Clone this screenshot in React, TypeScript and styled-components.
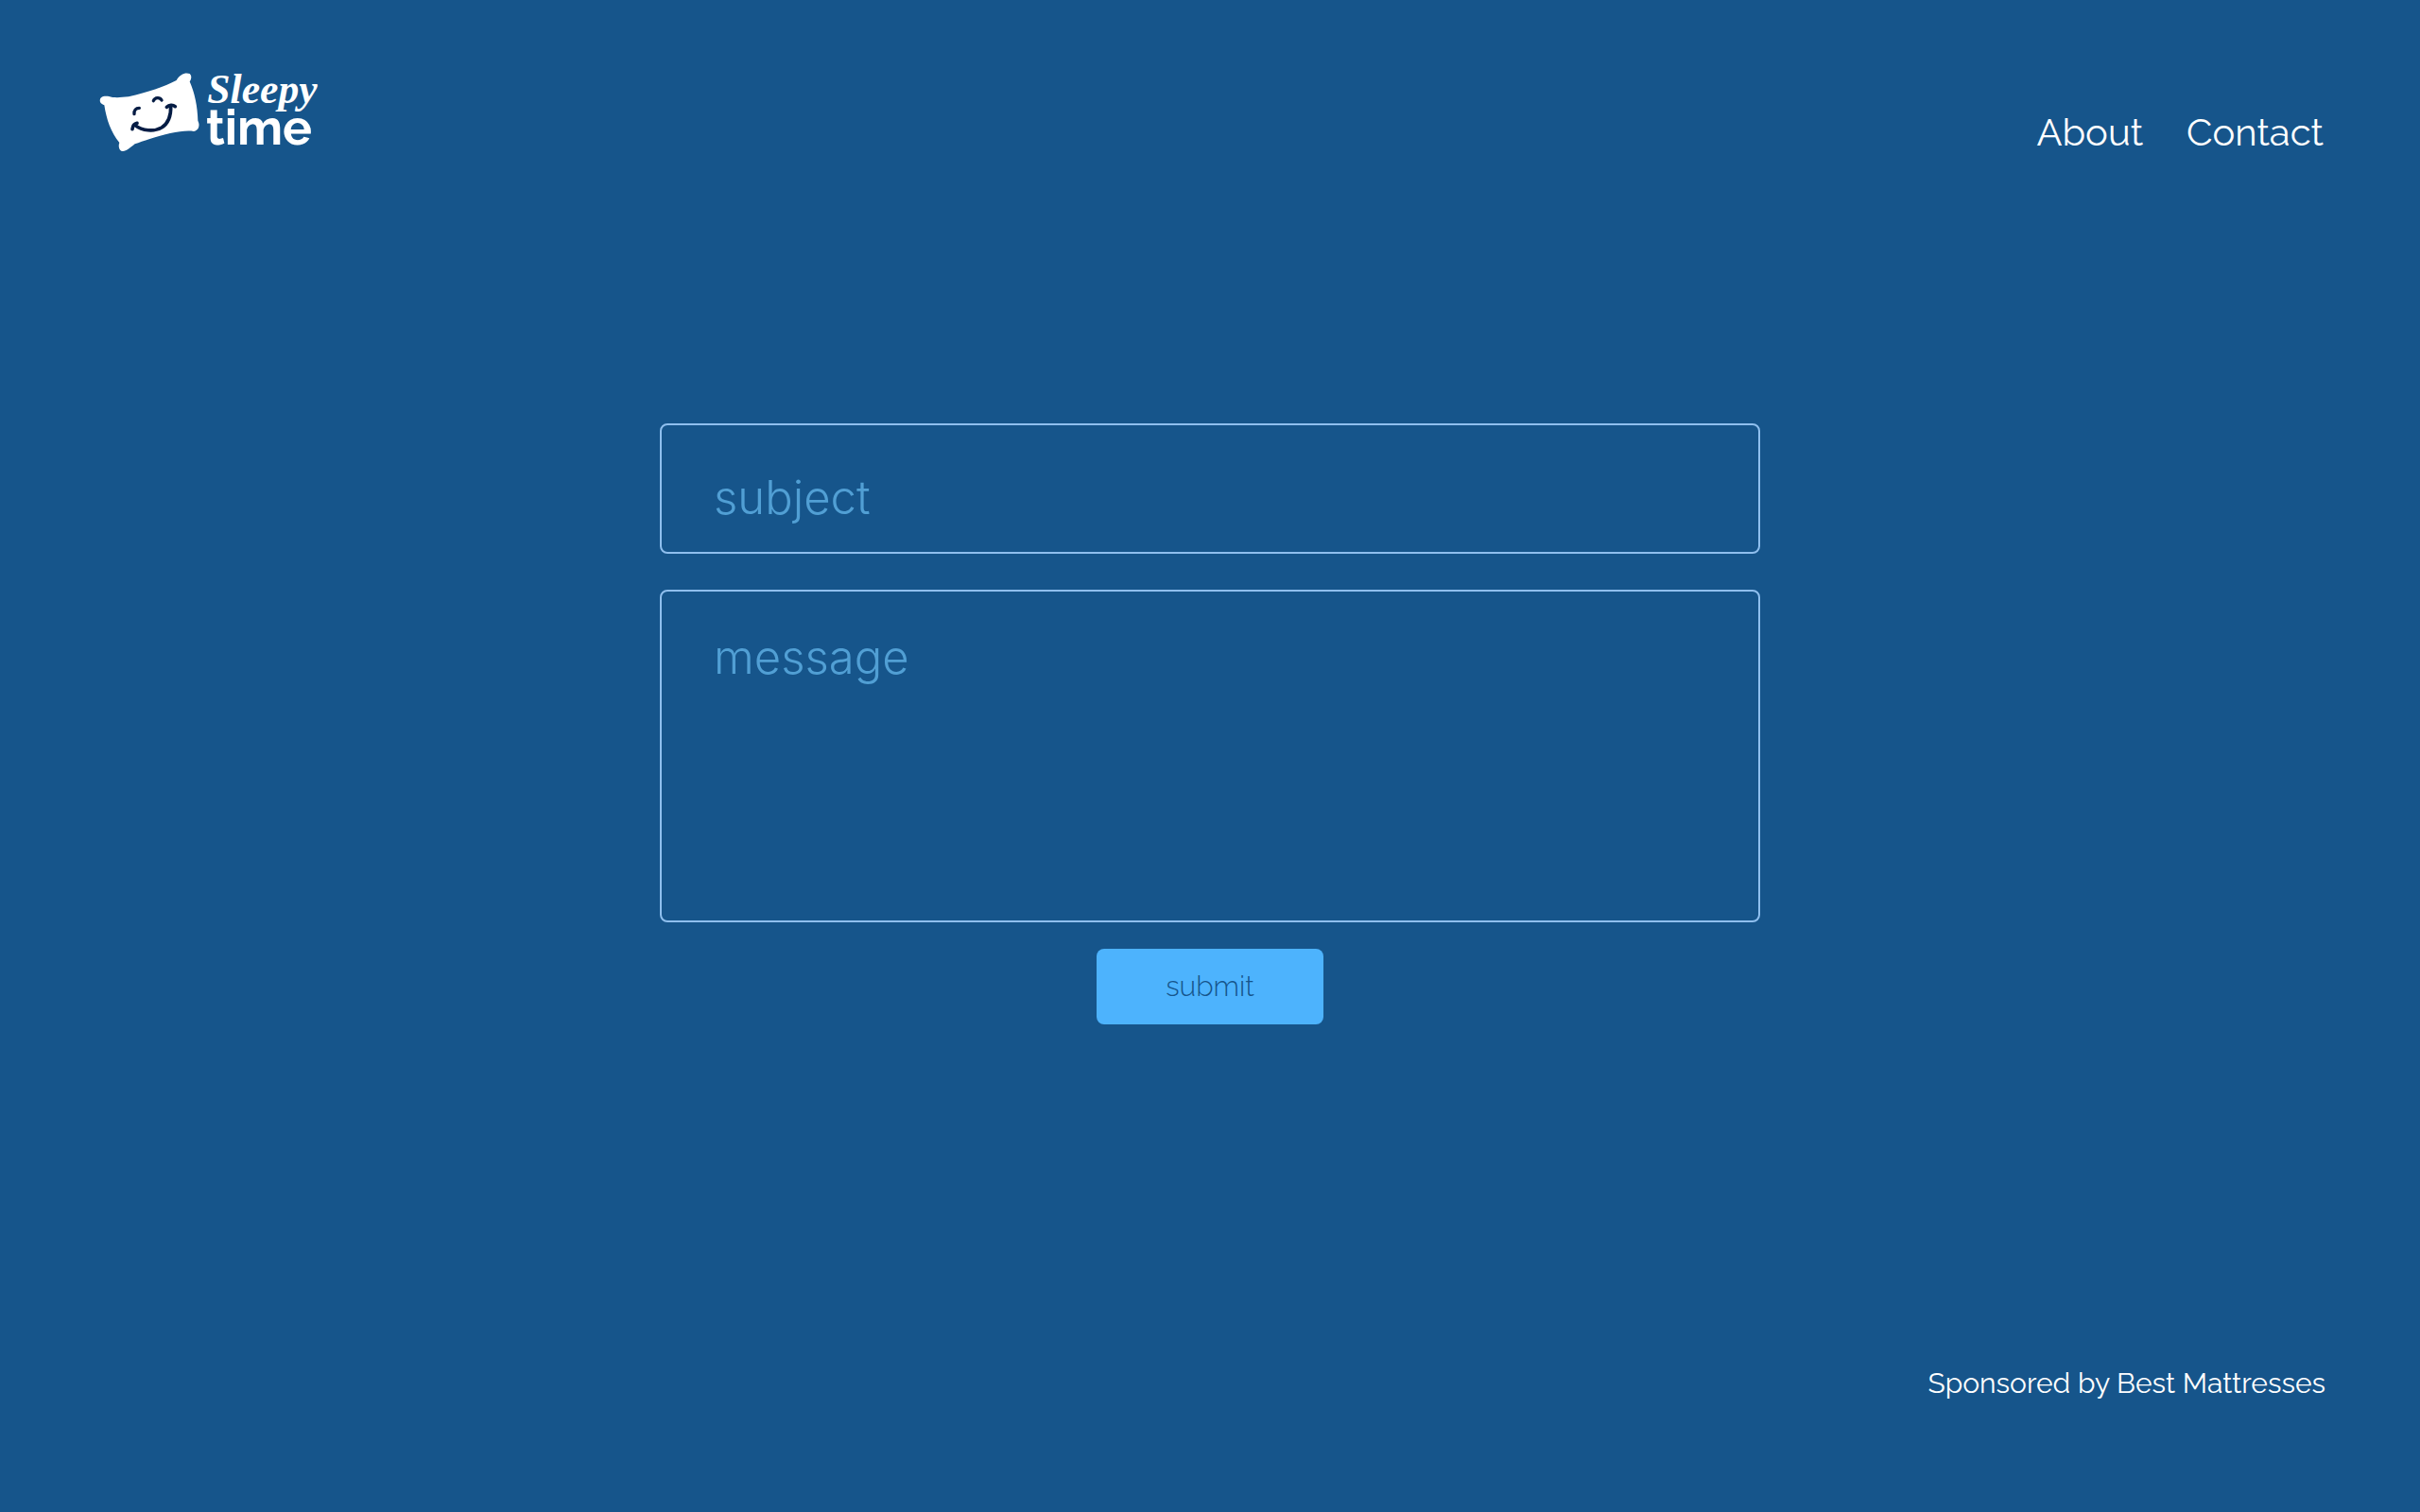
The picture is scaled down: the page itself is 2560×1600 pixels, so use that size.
import React from "react";
import styled, { createGlobalStyle, css } from "styled-components";

const colors = {
  page: "#16558b",
  border: "#8fbfee",
  placeholder: "#519fd4",
  button: "#4db3fd",
  ink: "#051c44",
};

const GlobalStyle = createGlobalStyle`
  *, *::before, *::after { box-sizing: border-box; }
  body {
    margin: 0;
    background: ${colors.page};
    color: #fff;
    font-family: Raleway, Lato, sans-serif;
  }
`;

const Page = styled.div`
  display: flex;
  flex-direction: column;
  min-height: 100vh;
`;

const Header = styled.header`
  display: flex;
  justify-content: space-between;
  align-items: flex-start;
  padding: 70px 102px 0 104px;
`;

const LogoLink = styled.a`
  display: block;
`;

const LogoDrawing = styled.svg`
  display: block;
  width: 232px;
  height: 92px;
  overflow: visible;
`;

const ScriptWord = styled.text`
  font: italic 700 131px "Liberation Serif", serif;
  fill: #fff;
`;

const PlainWord = styled.text`
  font: 700 155px Raleway, Lato, sans-serif;
  fill: #fff;
`;

const Nav = styled.nav`
  display: flex;
  gap: 46px;
  padding-top: 46px;
`;

const NavLink = styled.a`
  color: inherit;
  font-size: 40px;
  line-height: 48px;
  text-decoration: none;
`;

const Main = styled.main`
  flex: 1;
  display: flex;
  justify-content: center;
  padding: 284px 40px 80px;
`;

const Form = styled.form`
  display: flex;
  flex-direction: column;
  align-items: center;
  width: 100%;
  max-width: 1164px;
`;

const fieldStyle = css`
  display: block;
  width: 100%;
  margin: 0;
  border: 2px solid ${colors.border};
  border-radius: 8px;
  background: transparent;
  color: #fff;
  font-family: "Helvetica Neue", Inter, sans-serif;
  font-size: 49px;
  font-weight: 300;
  line-height: 60px;
  outline: none;
  &::placeholder {
    color: ${colors.placeholder};
    opacity: 1;
  }
`;

const SubjectInput = styled.input`
  ${fieldStyle}
  height: 138px;
  padding: 46px 55px 28px;
`;

const MessageInput = styled.textarea`
  ${fieldStyle}
  height: 352px;
  margin-top: 38px;
  padding: 40px 55px;
  resize: none;
`;

const SubmitButton = styled.button`
  width: 240px;
  height: 80px;
  margin-top: 28px;
  padding: 0 0 2px;
  border: 0;
  border-radius: 8px;
  background: ${colors.button};
  color: ${colors.page};
  font-family: inherit;
  font-size: 30px;
  font-weight: 300;
  cursor: pointer;
`;

const Footer = styled.footer`
  display: flex;
  justify-content: flex-end;
  padding: 0 100px 118px;
`;

const SponsorLink = styled.a`
  color: inherit;
  font-size: 30px;
  line-height: 36px;
  text-decoration: none;
`;

function Logo() {
  return (
    <LogoDrawing viewBox="42 30 696 276" role="img" aria-label="Sleepy time">
      <path
        fill="#fff"
        d="M48 144 C44 128 58 123 76 126 C88 131 112 130 138 127 C200 112 250 96 290 75 C300 56 318 49 332 54 C340 62 337 72 332 79 C348 115 357 160 358 203 C366 218 360 234 345 237 C325 234 300 237 270 243 C220 254 185 268 158 277 C142 290 128 303 115 299 C106 294 106 280 109 273 C82 240 68 200 61 154 C56 152 51 149 48 144 Z"
      />
      <g fill="none" stroke={colors.ink} strokeLinecap="round">
        <path strokeWidth="10" d="M156 182 C155 170 161 163 172 163" />
        <path strokeWidth="10" d="M217 140 C222 129 237 128 243 138" />
        <path strokeWidth="11" d="M158 217 C182 236 218 239 243 225 C264 212 273 188 272 156" />
        <path strokeWidth="11" d="M150 230 C151 220 156 213 165 211" />
        <path strokeWidth="11" d="M259 160 C267 153 278 152 286 158" />
      </g>
      <ScriptWord x="388" y="148">Sleepy</ScriptWord>
      <PlainWord x="384" y="280">time</PlainWord>
    </LogoDrawing>
  );
}

export default function App() {
  return (
    <>
      <GlobalStyle />
      <Page>
        <Header>
          <LogoLink href="/">
            <Logo />
          </LogoLink>
          <Nav>
            <NavLink href="/about">About</NavLink>
            <NavLink href="/contact">Contact</NavLink>
          </Nav>
        </Header>
        <Main>
          <Form onSubmit={(event) => event.preventDefault()}>
            <SubjectInput name="subject" type="text" aria-label="subject" placeholder="subject" />
            <MessageInput name="message" aria-label="message" placeholder="message" />
            <SubmitButton type="submit">submit</SubmitButton>
          </Form>
        </Main>
        <Footer>
          <SponsorLink href="/sponsor">Sponsored by Best Mattresses</SponsorLink>
        </Footer>
      </Page>
    </>
  );
}
